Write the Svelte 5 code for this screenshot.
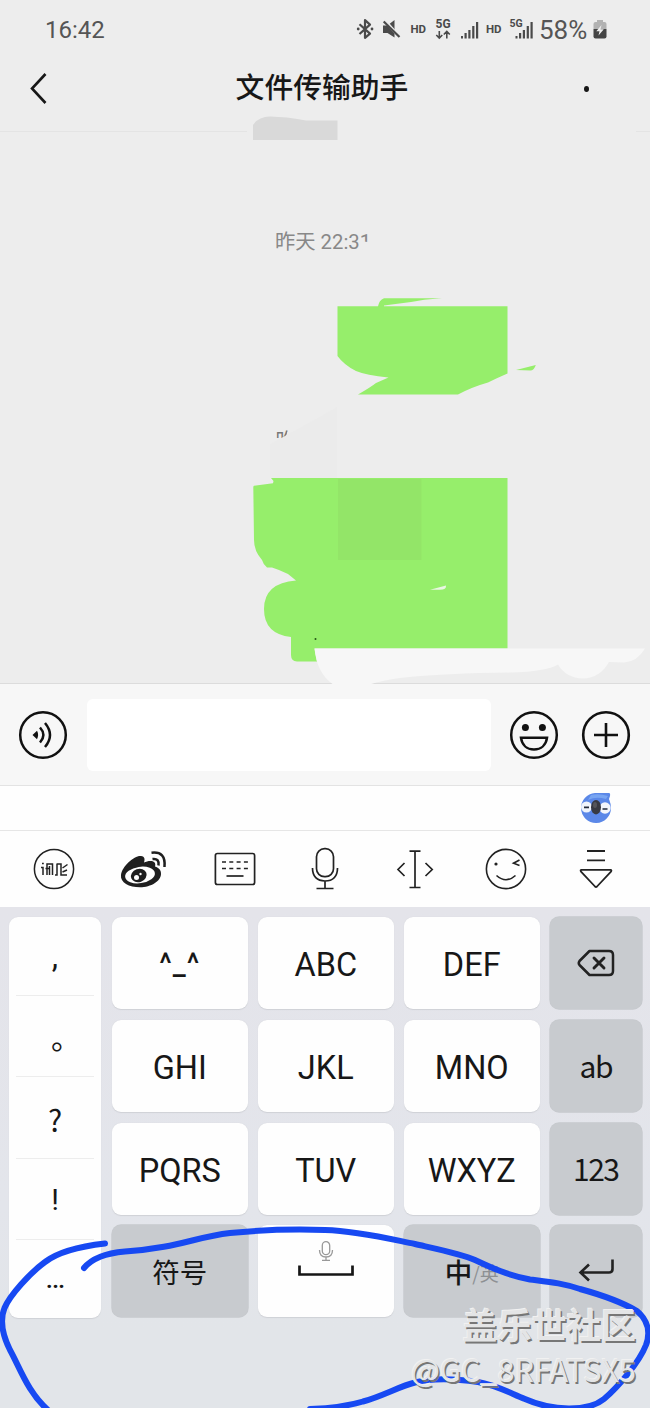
<script lang="ts">
	type Key = { label: string; kind?: string };

	const punctuation = [',', '。', '?', '!', '...'];

	const keys: Key[] = [
		{ label: '^_^', kind: 'face' },
		{ label: 'ABC' },
		{ label: 'DEF' },
		{ label: 'delete', kind: 'delete' },
		{ label: 'GHI' },
		{ label: 'JKL' },
		{ label: 'MNO' },
		{ label: 'ab', kind: 'side' },
		{ label: 'PQRS' },
		{ label: 'TUV' },
		{ label: 'WXYZ' },
		{ label: '123', kind: 'side' },
		{ label: '符号', kind: 'symbol' },
		{ label: 'space', kind: 'space' },
		{ label: '中', kind: 'lang' },
		{ label: 'enter', kind: 'enter' }
	];

	const dark = ['delete', 'side', 'symbol', 'lang', 'enter'];
</script>

<div class="phone">
	<div class="status">
		<span class="clock">16:42</span>
		<svg class="status-icons" width="182" height="40" viewBox="354 10 182 40">
			<g fill="none" stroke="#4a4a4a" stroke-width="2.2" stroke-linejoin="round">
				<path d="M358.500 24.200 369 33.600 364 37.800V20.200L369 24.600 358.500 34" />
			</g>
			<circle cx="357.200" cy="29" r="1.400" fill="#4a4a4a" />
			<circle cx="371" cy="29" r="1.400" fill="#4a4a4a" />
			<path d="M382 25.500h4.500L393.500 20v17.500L386.500 33H382z" fill="#4a4a4a" />
			<path d="M383.500 20 398 36.500" stroke="#ececec" stroke-width="3" />
			<path d="M382.700 21.500 398.500 37" stroke="#4a4a4a" stroke-width="2.200" />
			<text x="409.500" y="33" class="hd">HD</text>
			<text x="434.500" y="28" class="net">5G</text>
			<path d="M438.300 31v7m-3-3 3 3 3-3M445.800 38.500v-7m-3 3 3-3 3 3" fill="none" stroke="#4a4a4a" stroke-width="1.600" />
			<g fill="#4a4a4a">
				<path d="M460 36h2v2.400h-2zM463.500 33h2.200v5.400h-2.200zM467.300 30h2.200v8.400h-2.200zM471.200 26h2.200v12.400h-2.200zM475 22h2.200v16.400H475z" />
				<path d="M514.500 36h2v2.400h-2zM518 33h2.200v5.400H518zM521.800 30h2.200v8.400h-2.200zM525.700 26h2.200v12.400h-2.200zM529.500 22h2.200v16.400h-2.200z" />
			</g>
			<text x="485" y="33" class="hd">HD</text>
			<text x="508.500" y="27" class="net small">5G</text>
		</svg>
		<span class="percent">58%</span>
		<svg class="battery" width="14" height="20" viewBox="0 0 14 20">
			<path d="M4 0h6v2h1.500Q13.500 2 13.500 4v5H.5V4Q.5 2 2.500 2H4z" fill="#b2b2b2" />
			<path d="M.5 9h13v7.500q0 2-2 2h-9q-2 0-2-2z" fill="#454545" />
			<path d="M8.500 5 3.300 11.300h3.200L5.500 15.500l5.300-6.200H7.500z" fill="#eee" />
		</svg>
	</div>

	<header>
		<svg width="18" height="32" viewBox="0 0 18 32">
			<path d="M15.500 2 2 16.500 15.500 31" fill="none" stroke="#171717" stroke-width="2.600" />
		</svg>
		<h1>文件传输助手</h1>
		<span class="more"></span>
	</header>

	<main>
		<div class="time">昨天 22:31</div>
		<svg class="marks" width="650" height="570" viewBox="0 114 650 570">
			<path d="M0 131.500H247M636 131.500H650" stroke="#e4e4e4" />
			<path d="M253 140V125Q258 117 270 116.500L287 117.500Q298 119 306 120.500H337.500V140z" fill="#d9d9d9" />
			<path d="M363.500 241.500 376 243V256H362z" fill="#ededed" />

			<clipPath id="cut"><path d="M272 426H290L285 438H272z" /></clipPath>
			<text x="275.500" y="447.500" class="cut" clip-path="url(#cut)">昨</text>
			<path d="M270 478V444Q306 425 337 407V478z" fill="#ebebeb" />

			<g fill="#96ee6b">
				<path d="M337.500 306.300H378Q379 300 384 298.200H442Q422 299.500 411 302L384 305.500V306.300H507.500V373.500Q497 378 488 382.500Q472 387 458 394.500H358Q371 387 376 383L388.500 377.500Q366 375 356 371Q344 365 337.500 356z" />
				<path d="M516 370 535.800 365Q534 370 531 370.600z" />
				<path d="M271 478H507.500V648.500H314.500L317 661.600H297Q291 661 291 655V637Q264 634 264 609Q264 583 296 580.500L288 574Q280 570 272 567.500H267Q263 564 262 560Q254 551 254 540L253.300 487Q253 485.500 256 485.500L273 483.300 273.500 481z" />
			</g>
			<path d="M338 479H421.500V560H338z" fill="#93e568" />
			<path d="M430 589.800 446 585.500Q446.500 589.800 440 589.800z" fill="#e9f6e2" />
			<circle cx="315.500" cy="639" r="1" fill="#245517" />
			<path d="M0 683.500H650" stroke="#dcdcdc" />
			<path d="M314.500 648.500H645Q637 662 624 662.500L609 662Q600 678 583 678.500Q566 678 558 664.500Q546 671.500 510 672.500Q445 673 400 678Q380 681 368 685H334Q317 674 314.500 648.500z" fill="#f7f7f7" />
		</svg>
	</main>

	<div class="composer">
		<svg width="50" height="50" viewBox="-25 -25 50 50" fill="none" stroke="#111" stroke-width="2.500">
			<circle r="22.800" />
			<path d="M-10.500 0-6-4.200Q-3.800 0-6 4.200z" fill="#111" stroke="none" />
			<path d="M-3-7.500Q3.800 0 -3 7.500M2-12Q12 0 2 12" />
		</svg>
		<div class="input"></div>
		<svg width="50" height="50" viewBox="-25 -25 50 50" fill="none" stroke="#111" stroke-width="2.500">
			<circle r="22.800" />
			<circle cx="-8.600" cy="-7.500" r="3.500" fill="#111" stroke="none" />
			<circle cx="8.400" cy="-7.500" r="3.500" fill="#111" stroke="none" />
			<path d="M-13 2.800H13C12 10 7 14.500 0 14.500S-12 10-13 2.800z" />
		</svg>
		<svg width="50" height="50" viewBox="-25 -25 50 50" fill="none" stroke="#111" stroke-width="2.600">
			<circle r="22.800" />
			<path d="M-12 0H12M0-12V12" />
		</svg>
	</div>

	<div class="candidates">
		<svg width="32" height="32" viewBox="-16 -16 32 32">
			<path d="M-1-15H13Q14.500-15 14-12L13-9Q15-4 15 0A15 15 0 1 1-1-15z" fill="#5b88e8" />
			<path d="M-5-13Q3-15 12-12L10-9Q0-12-8-8z" fill="#78a5f2" />
			<circle cx="-9.500" cy="-1" r="5.500" fill="#eef3fb" />
			<circle cx="9" cy="0" r="5.700" fill="#f3f6fc" />
			<path d="M-12-.6H-7M6.500 1H11.500" stroke="#222a3a" stroke-width="1.700" />
			<ellipse cx="0" cy="-.8" rx="5" ry="7.200" fill="#383a42" />
			<ellipse cx="-1" cy="-3" rx="2" ry="3" fill="#55565b" />
		</svg>
	</div>

	<nav>
		<svg width="50" height="50" viewBox="-25 -25 50 50" fill="none" stroke="#222" stroke-width="1.500">
			<circle r="19.600" />
			<path d="M-13-1.500h2V6M-12-5.500h1.800M-7 6V-5H-1.500V6M-8.500-.5H-4M-4.500-3V6M1 6H3V-5.500M3-5H7V6H13M13.500-4.500 8.500-1M13 1 8.500 3" />
		</svg>
		<svg width="50" height="50" viewBox="-25 -25 50 50">
			<path d="M-23 6C-22-3-9-14-3-13C1-12.500 1-9.500 0-6.500C5-9 13-9 11-2.500C15-1 17 1 17 5C17 12 7 18.300-4 18.300S-24 13.500-23 6z" fill="#1f1f1f" />
			<ellipse cx="-4" cy="6" rx="15" ry="8.200" transform="rotate(-8 -4 6)" fill="#fff" />
			<ellipse cx="-5.200" cy="6.500" rx="8" ry="6.600" transform="rotate(-20 -5.200 6.500)" fill="#1f1f1f" />
			<circle cx="-7.500" cy="8.500" r="2.500" fill="#fff" />
			<circle cx="-3.500" cy="5" r="1.200" fill="#fff" />
			<path d="M8.500-10Q15.500-11 14.500-3.500M7.500-16.200Q22-18 20.500-2" fill="none" stroke="#1f1f1f" stroke-width="2.500" />
		</svg>
		<svg width="50" height="50" viewBox="-25 -25 50 50" fill="none" stroke="#222" stroke-width="1.700">
			<rect x="-19.600" y="-15.500" width="39.200" height="31" rx="2" />
			<path d="M-13-7h26M-13-.5h26" stroke-dasharray="4 3.300" />
			<path d="M-8.500 7h17" />
		</svg>
		<svg width="50" height="50" viewBox="-25 -25 50 50" fill="none" stroke="#222" stroke-width="1.700">
			<rect x="-8.500" y="-20.300" width="17" height="28" rx="8" />
			<path d="M-12.500-1C-12.500 7.500-8 12 0 12S12.500 7.500 12.500-1M0 12V19.500M-8.500 19.500h17" />
		</svg>
		<svg width="50" height="50" viewBox="-25 -25 50 50" fill="none" stroke="#222" stroke-width="1.700">
			<path d="M-5.500-17.800h11M-5.500 18.500h11M0-17.800v36.300M-10.500-6-17 0.500-10.500 7M10.500-6 17.200.5 10.500 7" />
		</svg>
		<svg width="50" height="50" viewBox="-25 -25 50 50" fill="none" stroke="#222" stroke-width="1.600">
			<circle r="19.600" />
			<circle cx="-10" cy="-5" r="1.600" fill="#222" stroke="none" />
			<path d="M13.500-9 7.500-5.800 13.500-3.500M-9.500 6.500Q0 15 9.500 6.500" />
		</svg>
		<svg width="50" height="50" viewBox="-25 -25 50 50" fill="none" stroke="#222" stroke-width="1.800" stroke-linejoin="round">
			<path d="M-9-18H9M-9-8.600H9" />
			<path d="M-14.500.8h29q1.500 0 .5 1.800L1 17.500q-1 1-2 0L-15 2.600q-1-1.800.5-1.800z" />
		</svg>
	</nav>

	<div class="keyboard">
		<div class="marks-col">
			{#each punctuation as mark, i}
				<span class="p{i}">{mark}</span>
			{/each}
		</div>
		<div class="grid">
			{#each keys as key}
				<div class="key {key.kind ?? ''}" class:dark={dark.includes(key.kind ?? '')}>
					{#if key.kind === 'delete'}
						<svg width="40" height="30" viewBox="-20 -15 40 30" fill="none" stroke="#222" stroke-width="2.500" stroke-linejoin="round" stroke-linecap="round">
							<path d="M-6.500-12H13Q17-12 17-8V8Q17 12 13 12H-6.500L-16.500 2Q-18 0-16.500-2z" />
							<path d="M-2-5 8 5M8-5-2 5" stroke-width="2.900" />
						</svg>
					{:else if key.kind === 'space'}
						<svg width="60" height="40" viewBox="-30 -20 60 40" fill="none">
							<g stroke="#999" stroke-width="1.300">
								<rect x="-3.700" y="-18.300" width="7.400" height="13" rx="3.700" />
								<path d="M-6.500-10Q-6.500-3 0-3T6.500-10M0-3V.3M-4 .3H4" />
							</g>
							<path d="M-26.500 5.500v9h53v-9" stroke="#161616" stroke-width="2.700" />
						</svg>
					{:else if key.kind === 'enter'}
						<svg width="40" height="30" viewBox="-20 -15 40 30" fill="none" stroke="#222" stroke-width="2.600">
							<path d="M-7-7.500-15.500.5-7 8.500M-15 .5H13Q16.500.5 16.500-3V-12.500" />
						</svg>
					{:else if key.kind === 'lang'}
						{key.label}<small>/英</small>
					{:else}
						{key.label}
					{/if}
				</div>
			{/each}
		</div>
	</div>

	<svg class="ink" width="650" height="188" viewBox="0 1220 650 188" fill="none" stroke="#1749f2" stroke-width="6" stroke-linecap="round" stroke-linejoin="round">
		<path d="M105 1243.500C83 1246 58 1252 45 1262C30 1273 10 1295 4.500 1308C-1 1322 3 1336 10 1350C20 1368 28 1393 49 1411" />
		<path d="M84 1268C93 1257 108 1253 125 1251.500C178 1248 195 1237 230 1233C260 1230 295 1229 325 1230C358 1231 390 1239 415 1244C437 1249 462 1254 475 1260C492 1268 507 1275 530 1279.500C550 1282 562 1283 580 1289C602 1295 625 1304 637 1311C649 1321 650 1334 646 1345C639 1363 617 1388 604 1399C588 1412 552 1411 525 1399C510 1393 496 1385 478 1382C458 1379 435 1377 415 1382.500C400 1386 383 1396 363 1401.500C348 1406 333 1408 310 1409" />
	</svg>

	<div class="watermark">
		<div class="community">盖乐世社区</div>
		<div class="author">@GC_8RFATSX5</div>
	</div>
</div>

<style>
	.phone {
		position: relative;
		width: 650px;
		height: 1408px;
		overflow: hidden;
		display: flex;
		flex-direction: column;
		background: #ededed;
		color: #171717;
		font-family: Roboto, 'Noto Sans CJK SC', sans-serif;
	}

	svg {
		display: block;
		flex-shrink: 0;
	}

	.status {
		height: 59px;
		box-sizing: border-box;
		padding: 0 43px 0 45px;
		display: flex;
		align-items: center;
		color: #555;
	}

	.clock {
		flex: 1;
		font-size: 24px;
	}

	.percent {
		width: 54px;
		margin-left: 2px;
		font-size: 26px;
	}

	.hd,
	.net {
		font: 700 11.5px Roboto, sans-serif;
		fill: #4a4a4a;
	}

	.net {
		font-size: 12px;
	}

	.net.small {
		font-size: 10.5px;
	}

	header {
		height: 55px;
		box-sizing: border-box;
		padding: 2px 61px 0 30px;
		display: flex;
		align-items: center;
		justify-content: space-between;
	}

	h1 {
		margin: -4px 0 0 12px;
		font: 500 28.8px/40px 'Noto Sans CJK SC', sans-serif;
	}

	.more {
		width: 5px;
		height: 6px;
		margin-top: 2px;
		border-radius: 50%;
		background: #171717;
	}

	main {
		position: relative;
		height: 570px;
	}

	.time {
		padding: 114px 0 0 275px;
		font-size: 20.3px;
		line-height: 29px;
		color: #888;
	}

	.cut {
		font: 20px 'Noto Sans CJK SC', sans-serif;
		fill: #777;
	}

	.marks {
		position: absolute;
		inset: 0;
	}

	.composer {
		height: 102px;
		box-sizing: border-box;
		padding: 0 19px 0 18px;
		border-bottom: 1px solid #e3e3e3;
		background: #f7f7f7;
		display: flex;
		align-items: center;
	}

	.input {
		width: 404px;
		height: 72px;
		margin: 0 18px 0 19px;
		border-radius: 6px;
		background: #fff;
	}

	.composer svg:last-child {
		margin-left: 22px;
	}

	.candidates {
		height: 45px;
		box-sizing: border-box;
		padding-right: 38px;
		border-bottom: 1px solid #e6e6e6;
		background: #fefefe;
		display: flex;
		align-items: center;
		justify-content: flex-end;
	}

	nav {
		height: 76px;
		padding: 0 9px;
		background: #fefefe;
		display: flex;
		align-items: center;
		justify-content: space-around;
	}

	.keyboard {
		flex: 1;
		padding: 10px 8px 0 9px;
		background: linear-gradient(#e4e4ea, #e3e5eb 60%, #e2e5e9 84%);
		display: flex;
		align-items: flex-start;
		gap: 10.5px;
	}

	.marks-col {
		width: 92px;
		height: 400.5px;
		box-sizing: border-box;
		padding: 0 7px;
		border-radius: 9px;
		background: #fefefe;
		box-shadow: 0 0.5px 1px #cfd1d6;
		display: grid;
		grid-template-rows: 79px 81px 82px 81px 77px;
		font-size: 30px;
	}

	.marks-col span {
		border-bottom: 1px solid #ededed;
		text-align: center;
		line-height: 80px;
	}

	.marks-col .p0 {
		line-height: 79px;
		font-size: 32px;
	}

	.marks-col .p1 {
		padding-left: 22px;
		line-height: 85px;
	}

	.marks-col .p2 {
		line-height: 84px;
		font-family: 'Noto Sans CJK SC', sans-serif;
	}

	.marks-col .p3 {
		line-height: 82px;
	}

	.marks-col .p4 {
		border: none;
		line-height: 79px;
		font-size: 26px;
		font-weight: 500;
		letter-spacing: -1px;
	}

	.grid {
		display: grid;
		grid-template-columns: 136.5px 136.5px 136.5px 92.5px;
		grid-auto-rows: 92px;
		gap: 10.8px 9.5px;
	}

	.key {
		border-radius: 9px;
		background: #fefefe;
		box-shadow: 0 0.5px 1px #cfd1d6;
		display: flex;
		align-items: center;
		justify-content: center;
		padding-top: 4px;
		box-sizing: border-box;
		font-size: 32.5px;
	}

	.dark {
		background: #c8cbcf;
		box-shadow: 0 0 0 0.7px #c6c9cd;
	}

	.delete {
		padding-top: 0;
	}

	.face {
		letter-spacing: 1px;
		padding-top: 1px;
		font-size: 29px;
		font-weight: 500;
	}

	.side {
		padding: 0 0 2px;
		font-family: 'Noto Sans CJK SC', sans-serif;
		font-size: 30px;
		letter-spacing: -1.5px;
	}

	.symbol,
	.lang {
		font: 27.5px 'Noto Sans CJK SC', sans-serif;
		padding-bottom: 5px;
	}

	.lang {
		font-weight: 500;
	}

	.lang small {
		padding-top: 4px;
		font-size: 19px;
		font-weight: 400;
		color: #8d9093;
	}

	.space {
		align-items: flex-start;
		padding-top: 15px;
	}

	.enter {
		padding-top: 1px;
	}

	.ink {
		position: absolute;
		left: 0;
		bottom: 0;
	}

	.watermark {
		position: absolute;
		right: 14px;
		bottom: 17px;
		text-align: right;
		color: #e4e5e6;
		text-shadow: 1.5px 1.5px 0 #777, -1px -1px 0 #f1f1f1;
		font-family: 'Noto Sans CJK SC', sans-serif;
	}

	.community {
		font-size: 34.7px;
		font-weight: 700;
		line-height: 46px;
	}

	.author {
		font-size: 30.6px;
		line-height: 44px;
	}
</style>
